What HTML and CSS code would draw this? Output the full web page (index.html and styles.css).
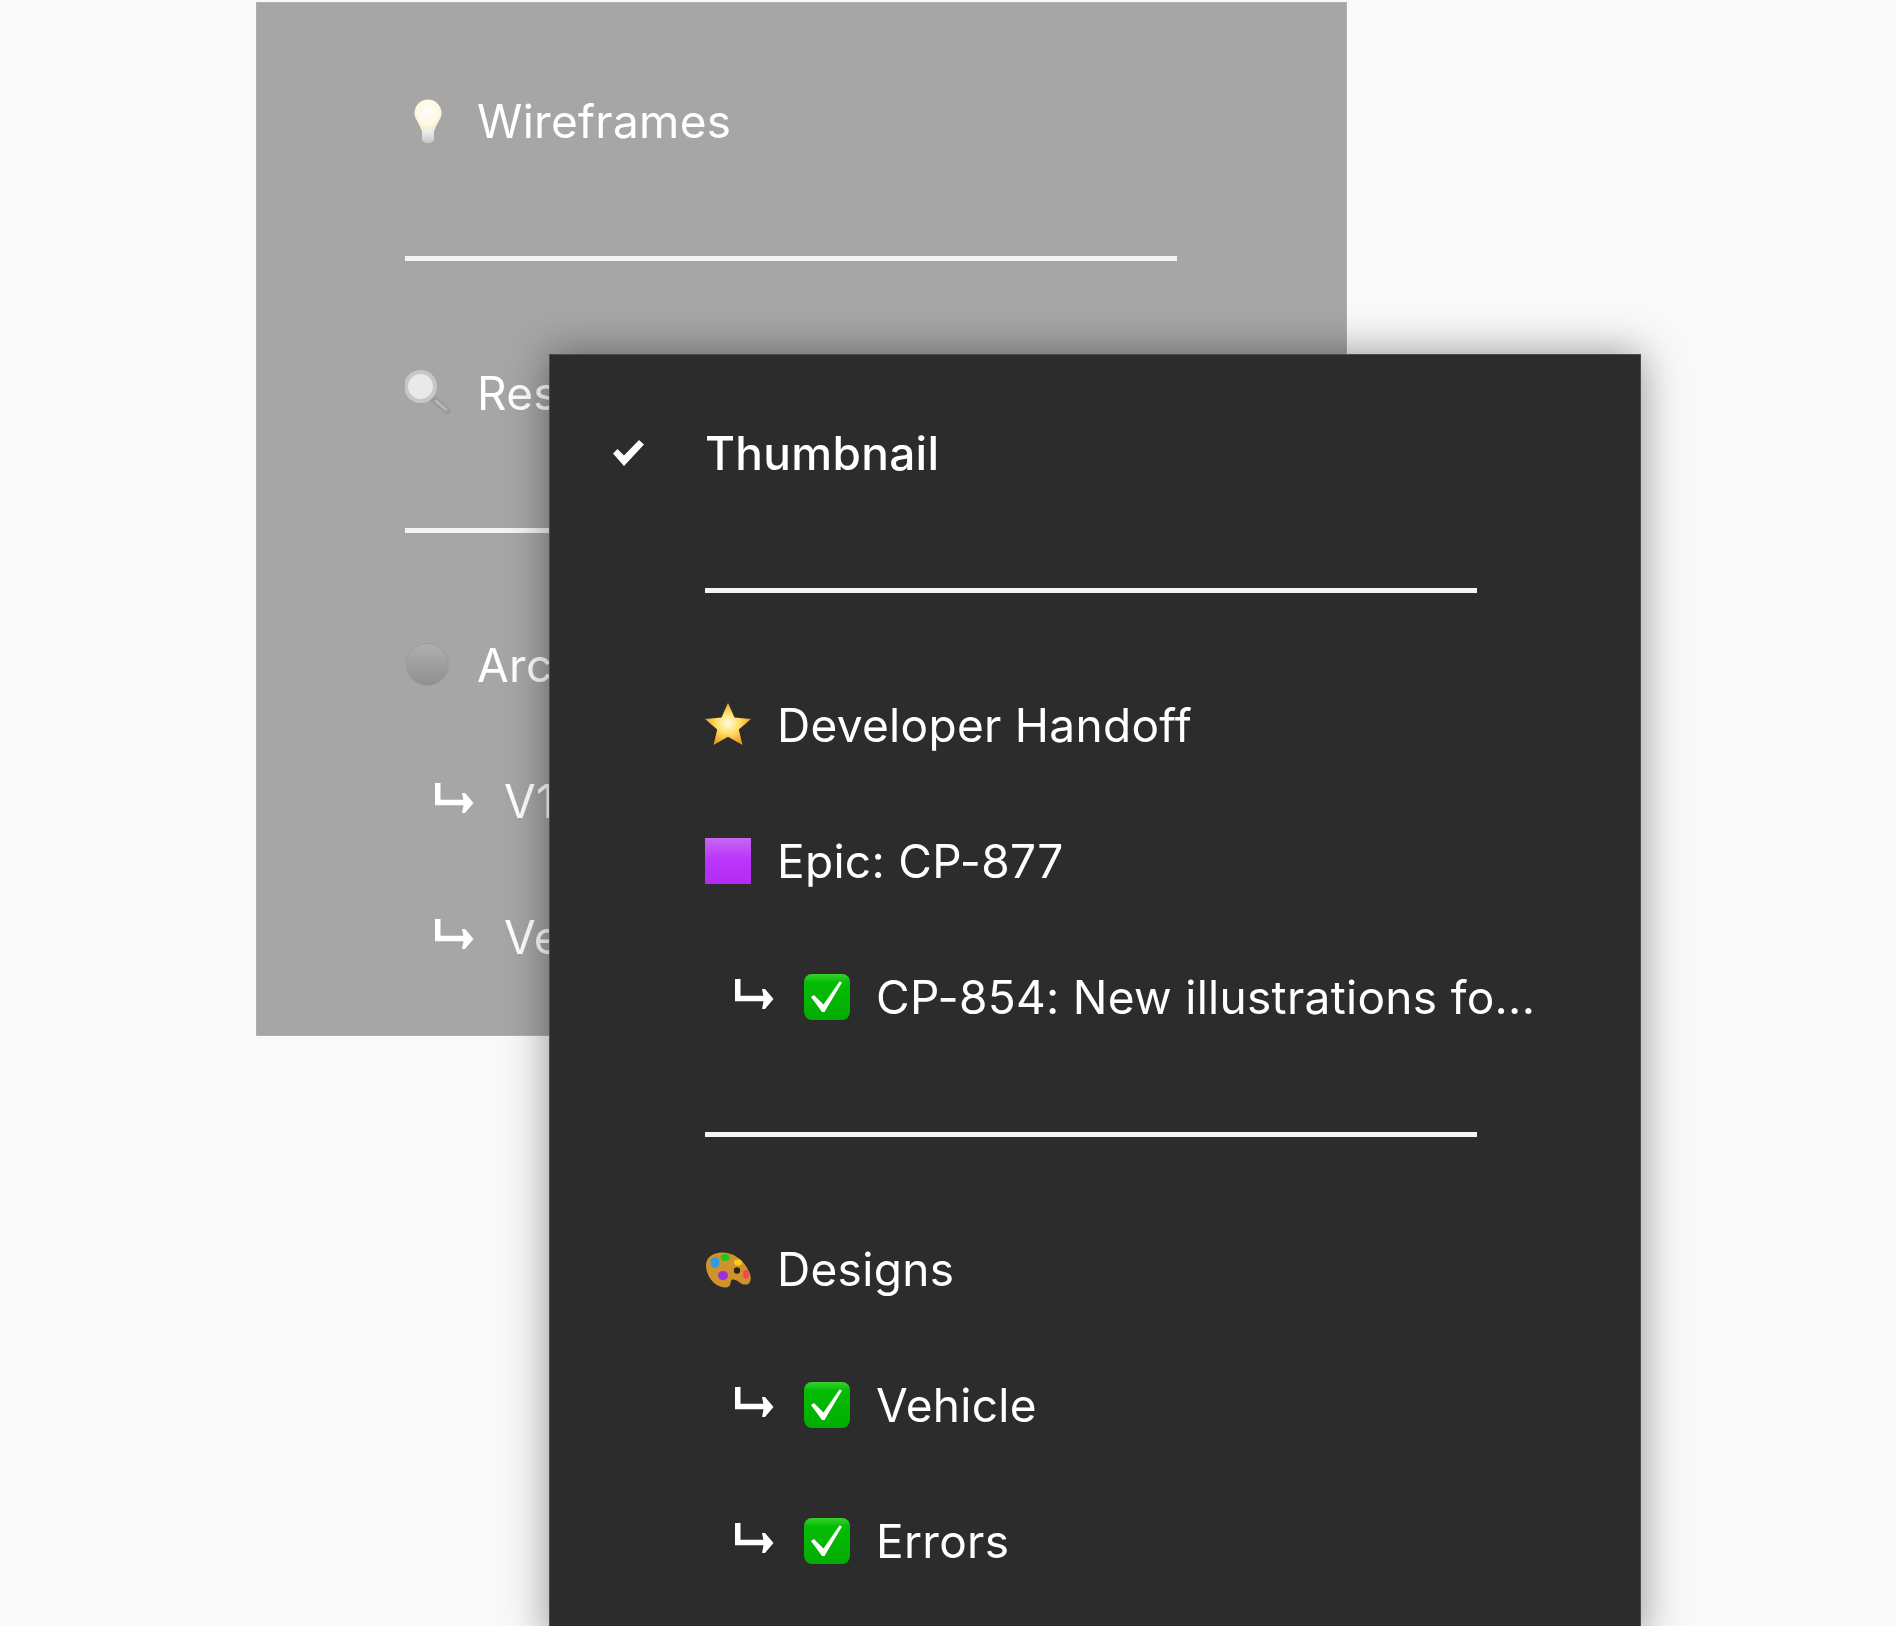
FILE: index.html
```html
<!DOCTYPE html>
<html lang="en">
<head>
<meta charset="UTF-8" />
<meta name="viewport" content="width=device-width, initial-scale=1" />
<title>Page menu</title>
<link rel="stylesheet" href="styles.css">
</head>
<body>

<svg class="icon-defs" aria-hidden="true">
  <defs>
    <linearGradient id="grad-purple" x1="0" y1="0" x2="0" y2="1">
      <stop offset="0" stop-color="#c767f3" />
      <stop offset="0.45" stop-color="#ba36fa" />
      <stop offset="1" stop-color="#b42af4" />
    </linearGradient>
    <linearGradient id="grad-green" x1="0" y1="0" x2="0" y2="1">
      <stop offset="0" stop-color="#39d02f" />
      <stop offset="0.18" stop-color="#05bd05" />
      <stop offset="1" stop-color="#01ad01" />
    </linearGradient>
    <radialGradient id="grad-star" cx="0.5" cy="0.48" r="0.55">
      <stop offset="0" stop-color="#fffde0" />
      <stop offset="0.45" stop-color="#ffdf6a" />
      <stop offset="1" stop-color="#ec9410" />
    </radialGradient>
    <radialGradient id="grad-bulb" cx="0.5" cy="0.4" r="0.6">
      <stop offset="0" stop-color="#fefdf8" />
      <stop offset="0.65" stop-color="#fdf9e6" />
      <stop offset="1" stop-color="#f5eecb" />
    </radialGradient>
    <linearGradient id="grad-base" x1="0" y1="0" x2="0" y2="1">
      <stop offset="0" stop-color="#f4f4f4" />
      <stop offset="1" stop-color="#c6c6c6" />
    </linearGradient>
    <linearGradient id="grad-ball" x1="0" y1="0" x2="0" y2="1">
      <stop offset="0" stop-color="#afafaf" />
      <stop offset="1" stop-color="#8f8f8f" />
    </linearGradient>

    <symbol id="ic-arrow" viewBox="0 0 39 30">
      <path d="M2.75 0V19.5H30" fill="none" stroke="#fff" stroke-width="5.5" />
      <path d="M27 10H30L38.5 20L30 30H27L29 20Z" fill="#fff" />
    </symbol>
    <symbol id="ic-check" viewBox="0 0 32 27">
      <path d="M1 14.5L5.5 10L12 16.5L27 1L32 5.5L12 27Z" fill="#fff" />
    </symbol>
    <symbol id="ic-star" viewBox="0 0 46 42">
      <path d="M23 0L29.5 14.5L46 16L33.8 26.6L37.5 42L23 33.8L8.5 42L12.2 26.6L0 16L16.5 14.5Z" fill="url(#grad-star)" />
    </symbol>
    <symbol id="ic-square" viewBox="0 0 46 46">
      <rect width="46" height="46" fill="url(#grad-purple)" />
    </symbol>
    <symbol id="ic-done" viewBox="0 0 46 46">
      <rect width="46" height="46" rx="8" fill="url(#grad-green)" />
      <path d="M7 23L10 21L19.5 30.5L35.5 7.5L38 8.5L20.5 38H18Z" fill="#fff" />
    </symbol>
    <symbol id="ic-palette" viewBox="0 0 46 35">
      <path d="M1 13C1 5 8 0 17 0C28 0 38 6 44 19C47 25 46 32 41 32C36 33 33 27 28 27C24 27 28 35 20 35C10 35 1 24 1 13Z" fill="#d0922c" />
      <ellipse cx="10" cy="10" rx="4.5" ry="5.5" fill="#2a9ce8" />
      <ellipse cx="20" cy="5" rx="4.5" ry="3.5" fill="#1ec61e" />
      <ellipse cx="33" cy="10" rx="4" ry="3" fill="#f5d020" />
      <ellipse cx="41" cy="22" rx="3" ry="4.5" fill="#ee4a50" />
      <ellipse cx="18" cy="23" rx="5" ry="4.5" fill="#9a2fe0" />
      <circle cx="32" cy="18" r="3.2" fill="#2c2418" />
    </symbol>
    <symbol id="ic-bulb" viewBox="0 0 46 46">
      <path d="M17 31H29V41C29 43.5 26 45 23 45C20 45 17 43.5 17 41Z" fill="url(#grad-base)" />
      <path d="M23 1.5C30.5 1.5 36.5 7.5 36.5 15C36.5 22 31 25 30 32H16C15 25 9.5 22 9.5 15C9.5 7.5 15.5 1.5 23 1.5Z" fill="url(#grad-bulb)" />
    </symbol>
    <symbol id="ic-search" viewBox="0 0 46 46">
      <path d="M27 28L42 41" stroke="#989c9e" stroke-width="7" stroke-linecap="round" />
      <path d="M31 31L41 39.5" stroke="#b8b8b8" stroke-width="2.5" stroke-linecap="round" />
      <circle cx="15.5" cy="16.5" r="14.5" fill="#e9e9e9" stroke="#c4c8ca" stroke-width="4" />
    </symbol>
    <symbol id="ic-ball" viewBox="0 0 46 46">
      <circle cx="22.5" cy="22.5" r="21" fill="url(#grad-ball)" stroke="#9b9b9b" />
    </symbol>
  </defs>
</svg>

<div class="stage">

  <div class="menu menu-faded">
    <div class="row"><svg class="emoji"><use href="#ic-bulb" /></svg><span>Wireframes</span></div>
    <div class="sep-row"><div class="sep"></div></div>
    <div class="row"><svg class="emoji"><use href="#ic-search" /></svg><span>Research</span></div>
    <div class="sep-row"><div class="sep"></div></div>
    <div class="row"><svg class="emoji"><use href="#ic-ball" /></svg><span>Archive</span></div>
    <div class="row nested"><svg class="arrow"><use href="#ic-arrow" /></svg><span>V1</span></div>
    <div class="row nested"><svg class="arrow"><use href="#ic-arrow" /></svg><span>Versions</span></div>
  </div>

  <div class="menu menu-open">
    <div class="row row-current"><svg class="tick"><use href="#ic-check" /></svg><span>Thumbnail</span></div>
    <div class="sep-row"><div class="sep"></div></div>
    <div class="row"><svg class="emoji star"><use href="#ic-star" /></svg><span>Developer Handoff</span></div>
    <div class="row"><svg class="emoji"><use href="#ic-square" /></svg><span>Epic: CP-877</span></div>
    <div class="row nested"><svg class="arrow"><use href="#ic-arrow" /></svg><svg class="emoji"><use href="#ic-done" /></svg><span>CP-854: New illustrations fo...</span></div>
    <div class="sep-row"><div class="sep"></div></div>
    <div class="row"><svg class="emoji palette"><use href="#ic-palette" /></svg><span>Designs</span></div>
    <div class="row nested"><svg class="arrow"><use href="#ic-arrow" /></svg><svg class="emoji"><use href="#ic-done" /></svg><span>Vehicle</span></div>
    <div class="row nested"><svg class="arrow"><use href="#ic-arrow" /></svg><svg class="emoji"><use href="#ic-done" /></svg><span>Errors</span></div>
  </div>

</div>

</body>
</html>
```

FILE: styles.css
```css
html, body {
  margin: 0; padding: 0;
  height: 100%;
  overflow: hidden;
  background: #f9f9f9;
  font-family: Inter, "Liberation Sans", sans-serif;
}
.icon-defs {
  position: absolute;
  width: 0; height: 0;
}
.stage {
  position: relative;
  padding: 2px 0 0 256px;
}
.menu {
  box-sizing: border-box;
  width: 1091px;
  color: #fff;
  font-size: 46px;
  letter-spacing: 0.3px;
  white-space: nowrap;
}
.menu-faded {
  padding: 52px 0 30px 149px;
  background: #a6a6a6;
  box-shadow: inset 0 0 0 1px #b0b0b0;
}
.menu-open {
  position: absolute;
  top: 354px; left: 549px;
  width: 1092px;
  padding: 32px 0 32px 156px;
  background: #2c2c2c;
  box-shadow: inset 0 0 0 1px #4c4c4c, 0 0 40px rgba(0, 0, 0, 0.42);
}
.row {
  display: flex;
  align-items: center;
  height: 136px;
  filter: blur(0.5px);
}
.row span {
  margin-bottom: 3px;
}
.row-current span {
  font-weight: 500;
}
.row.nested {
  padding-left: 30px;
}
.sep-row {
  display: flex;
  align-items: center;
  height: 136px;
}
.sep {
  width: 772px;
  height: 5px;
  background: #f4f4f4;
}
.emoji {
  flex: none;
  width: 46px;
  height: 46px;
  margin: 0 26px 3px 0;
}
.emoji.star {
  margin-bottom: 4px;
}
.emoji.palette {
  margin-bottom: 1px;
}
.arrow {
  flex: none;
  width: 39px;
  height: 30px;
  margin: 0 30px 8px 0;
}
/* tick hangs in the left gutter, the label stays on the separator's edge */
.tick {
  flex: none;
  width: 32px;
  height: 27px;
  margin: 0 61px 3px -93px;
}
```
